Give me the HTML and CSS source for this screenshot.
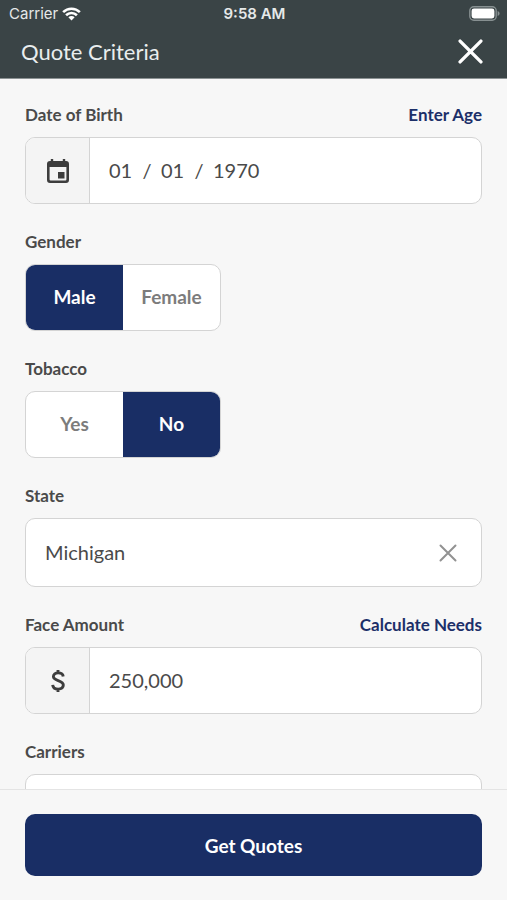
FILE: index.html
```html
<!DOCTYPE html>
<html lang="en">
<head>
  <meta charset="utf-8">
  <meta name="viewport" content="width=device-width, initial-scale=1">
  <title>Quote Criteria</title>
  <link rel="stylesheet" href="styles.css">
</head>
<body>
  <header class="header">
    <div class="status">
      <div class="status-left">
        <span>Carrier</span>
        <svg class="wifi" viewBox="0 0 20 14" aria-hidden="true">
          <path d="M1.200 5.100a12.500 12.500 0 0 1 17.600 0M4.300 8.300a8 8 0 0 1 11.400 0" fill="none" stroke="#fff" stroke-width="2.700"/>
          <path d="M6.700 10.500a4.700 4.700 0 0 1 6.600 0L10 13.800z" fill="#fff"/>
        </svg>
      </div>
      <span class="clock">9:58 AM</span>
      <div class="status-right">
        <svg class="battery" viewBox="0 0 31 15" aria-hidden="true">
          <rect x=".8" y=".8" width="26.4" height="13.4" rx="4" fill="none" stroke="#879091" stroke-width="1.4"/>
          <rect x="2.6" y="2.6" width="22.8" height="9.8" rx="2.4" fill="#fff"/>
          <path d="M28.6 5v5c1.3-.5 2-1.400 2-2.500s-.7-2-2-2.500z" fill="#879091"/>
        </svg>
      </div>
    </div>
    <div class="titlebar">
      <h1 class="title">Quote Criteria</h1>
      <button class="icon-button close" type="button" aria-label="Close">
        <svg viewBox="0 0 24 24" aria-hidden="true"><path d="M2 2l20 20M22 2L2 22" fill="none" stroke="#fff" stroke-width="3.200" stroke-linecap="round"/></svg>
      </button>
    </div>
  </header>

  <form class="form" id="quote">
    <div class="group">
      <div class="label-row">
        <label for="month">Date of Birth</label>
        <a href="#age">Enter Age</a>
      </div>
      <div class="field">
        <span class="addon">
          <svg class="calendar" viewBox="0 0 24 26" aria-hidden="true">
            <path d="M4 3h16a3 3 0 0 1 3 3v16a3 3 0 0 1-3 3H4a3 3 0 0 1-3-3V6a3 3 0 0 1 3-3zM3.600 9v12.400a1 1 0 0 0 1 1h14.800a1 1 0 0 0 1-1V9z" fill="#3d3d3d" fill-rule="evenodd"/>
            <path d="M6 1v4M18 1v4" stroke="#3d3d3d" stroke-width="2.400"/>
            <path d="M12 14h6.500v6.500H12z" fill="#3d3d3d"/>
          </svg>
        </span>
        <div class="date">
          <input id="month" class="two" value="01" inputmode="numeric" maxlength="2">
          <span class="slash">/</span>
          <input class="two" value="01" inputmode="numeric" maxlength="2" aria-label="Day">
          <span class="slash">/</span>
          <input class="four" value="1970" inputmode="numeric" maxlength="4" aria-label="Year">
        </div>
      </div>
    </div>

    <fieldset class="group">
      <legend class="label-row">Gender</legend>
      <div class="segments">
        <input type="radio" name="gender" id="male" checked><label for="male">Male</label>
        <input type="radio" name="gender" id="female"><label for="female">Female</label>
      </div>
    </fieldset>

    <fieldset class="group">
      <legend class="label-row">Tobacco</legend>
      <div class="segments">
        <input type="radio" name="tobacco" id="yes"><label for="yes">Yes</label>
        <input type="radio" name="tobacco" id="no" checked><label for="no">No</label>
      </div>
    </fieldset>

    <div class="group">
      <div class="label-row"><label for="state">State</label></div>
      <div class="field tall">
        <select id="state" class="control"><option>Michigan</option></select>
        <button class="icon-button clear" type="button" aria-label="Clear state">
          <svg viewBox="0 0 18 18" aria-hidden="true"><path d="M1.500 1.500l15 15M16.500 1.500l-15 15" fill="none" stroke="#929292" stroke-width="2" stroke-linecap="round"/></svg>
        </button>
      </div>
    </div>

    <div class="group">
      <div class="label-row">
        <label for="amount">Face Amount</label>
        <a href="#needs">Calculate Needs</a>
      </div>
      <div class="field">
        <span class="addon">
          <svg class="dollar" viewBox="0 0 14 24" aria-hidden="true">
            <path d="M12.200 7.500C12 5.200 10.200 3.900 7.200 3.900c-2.900 0-4.800 1.400-4.800 3.600 0 5 9.900 3 9.900 8.600 0 2.500-2 4-5.200 4-3.300 0-5.200-1.600-5.400-4.200M7 1v3M7 20v3" fill="none" stroke="#3d3d3d" stroke-width="2.900"/>
          </svg>
        </span>
        <input id="amount" class="control" value="250,000" inputmode="numeric">
      </div>
    </div>

    <div class="group">
      <div class="label-row"><label for="carriers">Carriers</label></div>
      <div class="field tall"><select id="carriers" class="control"></select></div>
    </div>
  </form>

  <footer class="footer">
    <button class="submit" type="submit" form="quote">Get Quotes</button>
  </footer>
</body>
</html>
```
FILE: styles.css
```css
* {
  box-sizing: border-box;
}

body {
  display: flex;
  flex-direction: column;
  height: 100vh;
  margin: 0;
  background: #f7f7f7;
  color: #4a4a4a;
  font-family: Lato, "Liberation Sans", sans-serif;
  font-size: 20px;
}

input,
select,
button {
  margin: 0;
  padding: 0;
  border: 0;
  background: none;
  color: inherit;
  font: inherit;
}

svg {
  display: block;
}

.header {
  flex: none;
  background: #3a4446;
  border-bottom: 1px solid #8b9293;
  color: #fff;
}

.status {
  display: grid;
  grid-template-columns: 1fr auto 1fr;
  align-items: center;
  height: 27px;
  padding: 0 7px 0 9px;
  font-family: Inter, sans-serif;
  font-size: 15px;
  color: #e6e9e9;
}

.status-left {
  display: flex;
  align-items: center;
  gap: 4px;
}

.wifi {
  width: 19px;
  height: 14px;
}

.clock {
  font-weight: 600;
}

.status-right {
  display: flex;
  justify-content: flex-end;
}

.battery {
  width: 31px;
  height: 15px;
}

.titlebar {
  display: flex;
  justify-content: space-between;
  align-items: center;
  height: 51px;
  padding: 0 24px 2px 21px;
}

.title {
  margin: 0;
  font-size: 22px;
  font-weight: 400;
  color: #e9eeee;
}

.icon-button {
  flex: none;
  cursor: pointer;
}

.close {
  width: 25px;
}

.form {
  flex: 1;
  min-height: 0;
  padding: 24px 25px;
  overflow-y: auto;
  scrollbar-width: none;
}

.group {
  min-width: 0;
  margin: 0 0 26px;
  padding: 0;
  border: 0;
}

.label-row {
  display: flex;
  justify-content: space-between;
  width: 100%;
  margin-bottom: 10px;
  padding: 0;
  font-size: 17px;
  font-weight: 700;
  line-height: 24px;
}

.label-row a {
  color: #1c2f69;
  text-decoration: none;
}

.field {
  display: flex;
  align-items: center;
  height: 67px;
  border: 1px solid #d4d4d4;
  border-radius: 10px;
  background: #fff;
  overflow: hidden;
}

.tall {
  height: 69px;
}

.addon {
  display: flex;
  flex: none;
  align-items: center;
  justify-content: center;
  align-self: stretch;
  width: 64px;
  border-right: 1px solid #d4d4d4;
  background: #f4f4f4;
}

.calendar {
  width: 24px;
  height: 26px;
}

.dollar {
  width: 14px;
  height: 24px;
}

.control {
  flex: 1;
  min-width: 0;
  height: 100%;
  padding: 0 19px 2px;
  appearance: none;
}

.date {
  display: flex;
  align-items: center;
  padding: 0 0 2px 19px;
}

.two {
  width: 24px;
}

.four {
  width: 60px;
}

.slash {
  width: 28px;
  text-align: center;
}

.segments {
  display: grid;
  grid-template-columns: 1fr 1fr;
  position: relative;
  width: 196px;
  height: 67px;
  border: 1px solid #d4d4d4;
  border-radius: 10px;
  background: #fff;
  overflow: hidden;
}

.segments input {
  position: absolute;
  opacity: 0;
}

.segments label {
  display: flex;
  align-items: center;
  justify-content: center;
  padding-bottom: 2px;
  color: #7c7c7c;
  font-size: 19px;
  font-weight: 700;
}

.segments input:checked + label {
  background: #192e65;
  color: #fff;
}

.clear {
  width: 18px;
  margin-right: 24px;
}

.footer {
  flex: none;
  padding: 24px 25px;
  border-top: 1px solid #e4e4e4;
}

.submit {
  width: 100%;
  height: 62px;
  border-radius: 10px;
  background: #192e65;
  color: #fff;
  font-size: 19px;
  font-weight: 700;
}
```
